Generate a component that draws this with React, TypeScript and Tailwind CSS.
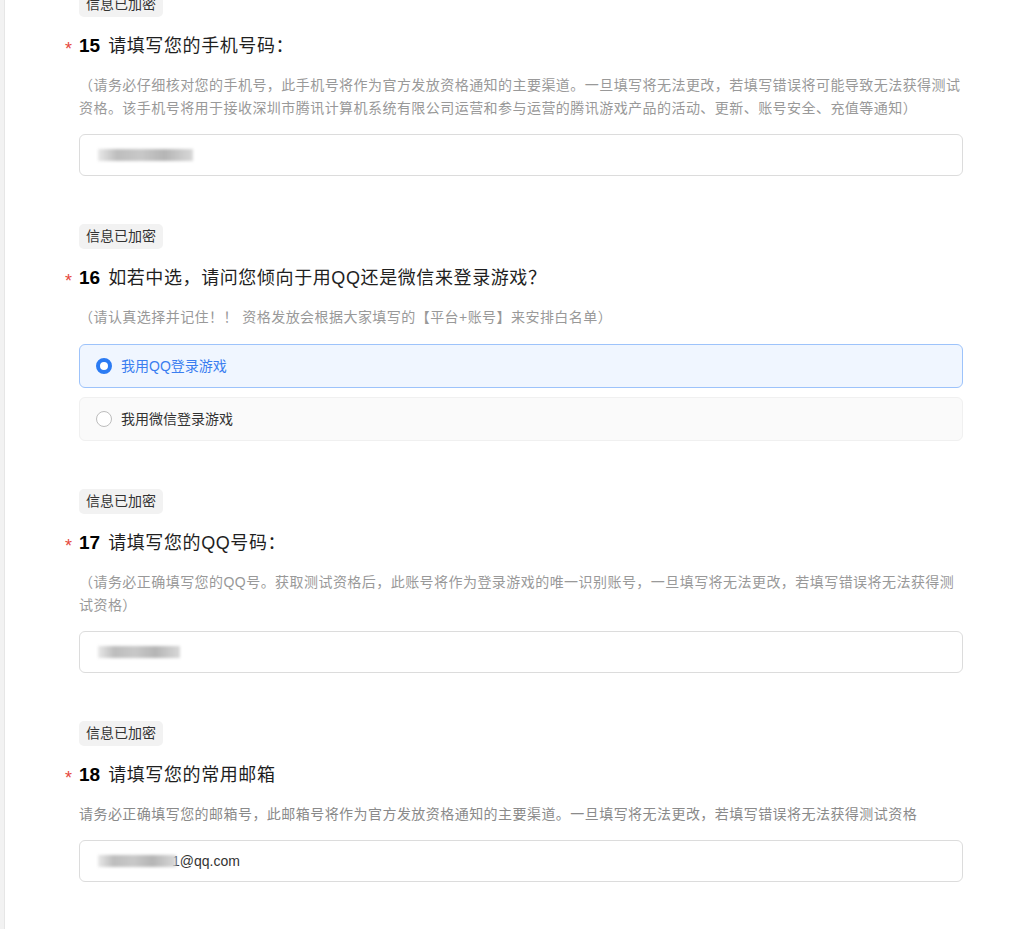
import { ReactNode } from 'react';

const FONT = { fontFamily: '"Liberation Sans", "Noto Sans CJK SC", sans-serif' };

function Badge() {
  return (
    <div className="inline-flex h-[25px] items-center rounded-[5px] bg-[#f2f2f2] px-[7px] text-[14px] text-[#333]">
      信息已加密
    </div>
  );
}

function Title({ num, text }: { num: string; text: string }) {
  return (
    <div className="relative mt-[17px] flex h-6 items-center text-[18px] leading-6 text-[#1f1f1f]">
      <span className="absolute left-[-14px] top-[3px] text-[18px] leading-6 text-[#e5483d]">*</span>
      <span className="mr-2 text-[19px] font-bold text-black">{num}</span>
      <span className="tracking-[0.6px]">{text}</span>
    </div>
  );
}

function Desc({ children, dark }: { children: ReactNode; dark?: boolean }) {
  return (
    <p
      className={`mt-4 text-[14px] leading-[23px] tracking-[0.45px] ${dark ? 'text-[#8a8a8a]' : 'text-[#999]'}`}
    >
      {children}
    </p>
  );
}

function Blur({ w }: { w: number }) {
  return (
    <span
      className="inline-block h-[12px] bg-[linear-gradient(90deg,#e8e8e8_0%,#bdbdbd_20%,#c8c8c8_45%,#b5b5b5_70%,#d8d8d8_100%)] blur-[1.5px]"
      style={{ width: w }}
    />
  );
}

function Field({ children }: { children: ReactNode }) {
  return (
    <div className="mt-[14px] flex h-[42px] items-center rounded-[6px] border border-[#dcdcdc] bg-white pl-[18px] text-[14px] text-[#333]">
      {children}
    </div>
  );
}

function Radio({ label, checked }: { label: string; checked?: boolean }) {
  return (
    <div
      className={`flex h-[44px] items-center gap-[9px] rounded-[6px] border px-4 text-[14px] ${
        checked ? 'border-[#9dc3fb] bg-[#f0f6ff] text-[#3a7ef0]' : 'border-[#f0f0f0] bg-[#fafafa] text-[#333]'
      }`}
    >
      {checked ? (
        <span className="h-4 w-4 rounded-full border-[4px] border-[#2b7bf3] bg-white" />
      ) : (
        <span className="h-4 w-4 rounded-full border border-[#bdbdbd] bg-white" />
      )}
      <span>{label}</span>
    </div>
  );
}

export default function App() {
  return (
    <div className="flex min-h-[929px] w-full overflow-hidden bg-white" style={FONT}>
      <div className="w-[5px] shrink-0 border-r border-[#e6e6e6] bg-[#f2f2f2]" />
      <div className="ml-[74px] mt-[-8px] flex w-[884px] shrink-0 flex-col gap-12">
        {/* Q15 */}
        <section>
          <Badge />
          <Title num="15" text="请填写您的手机号码：" />
          <Desc>
            （请务必仔细核对您的手机号，此手机号将作为官方发放资格通知的主要渠道。一旦填写将无法更改，若填写错误将可能导致无法获得测试资格。该手机号将用于接收深圳市腾讯计算机系统有限公司运营和参与运营的腾讯游戏产品的活动、更新、账号安全、充值等通知）
          </Desc>
          <Field>
            <Blur w={95} />
          </Field>
        </section>

        {/* Q16 */}
        <section>
          <Badge />
          <Title num="16" text="如若中选，请问您倾向于用QQ还是微信来登录游戏？" />
          <Desc>（请认真选择并记住！！ 资格发放会根据大家填写的【平台+账号】来安排白名单）</Desc>
          <div className="mt-[15px] flex flex-col gap-[9px]">
            <Radio label="我用QQ登录游戏" checked />
            <Radio label="我用微信登录游戏" />
          </div>
        </section>

        {/* Q17 */}
        <section>
          <Badge />
          <Title num="17" text="请填写您的QQ号码：" />
          <Desc>
            （请务必正确填写您的QQ号。获取测试资格后，此账号将作为登录游戏的唯一识别账号，一旦填写将无法更改，若填写错误将无法获得测试资格）
          </Desc>
          <Field>
            <Blur w={82} />
          </Field>
        </section>

        {/* Q18 */}
        <section>
          <Badge />
          <Title num="18" text="请填写您的常用邮箱" />
          <Desc dark>
            请务必正确填写您的邮箱号，此邮箱号将作为官方发放资格通知的主要渠道。一旦填写将无法更改，若填写错误将无法获得测试资格
          </Desc>
          <Field>
            <Blur w={78} />
            <span className="ml-[-4px]">1@qq.com</span>
          </Field>
        </section>
      </div>
    </div>
  );
}
